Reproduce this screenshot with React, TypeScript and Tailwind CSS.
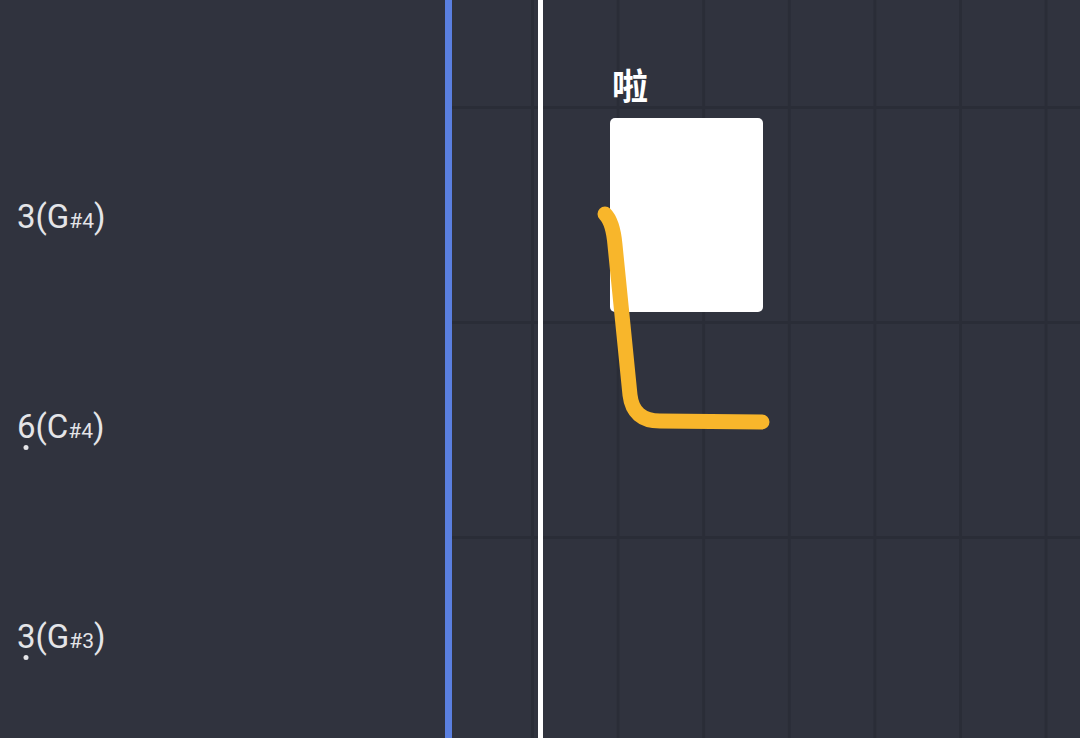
import React from 'react';

type Pitch = {
    degree: string;
    note: string;
    octave: string;
    low?: boolean;
};

const pitches: Pitch[] = [
    { degree: '3', note: 'G', octave: '4' },
    { degree: '6', note: 'C', octave: '4', low: true },
    { degree: '3', note: 'G', octave: '3', low: true }
];

function PitchLabel({ pitch }: { pitch: Pitch }) {
    return (
        <div className="flex h-[215px] items-center pl-[17px] pt-[6px] text-[#e4e5e8]">
            <span className="flex items-baseline text-[33px] leading-none">
                <span className="relative">
                    {pitch.degree}
                    {pitch.low && (
                        <span className="absolute left-1/2 top-[35px] h-[5px] w-[5px] -translate-x-1/2 rounded-full bg-[#e4e5e8]" />
                    )}
                </span>
                <span>({pitch.note}</span>
                <span className="text-[21px]">#{pitch.octave}</span>
                <span>)</span>
            </span>
        </div>
    );
}

export default function App() {
    return (
        <div
            className="flex h-[738px] w-[1080px] overflow-hidden bg-[#30333e]"
            style={{ fontFamily: 'Roboto, "Noto Sans CJK SC", sans-serif' }}
        >
            {/* Pitch column */}
            <div className="flex w-[452px] shrink-0 flex-col border-r-[7px] border-[#5a7fdf]">
                <div className="h-[108px] shrink-0" />
                {pitches.map((p, i) => (
                    <PitchLabel key={i} pitch={p} />
                ))}
            </div>

            {/* Roll grid */}
            <div className="relative flex-1 bg-[linear-gradient(to_right,#2a2d37_3px,transparent_3px),linear-gradient(to_bottom,#2a2d37_3px,transparent_3px)] bg-size-[85.6px_215px] bg-position-[79px_106px]">
                {/* Playhead */}
                <div className="absolute bottom-0 left-[86px] top-0 w-[5px] bg-white" />

                {/* Lyric + note */}
                <div className="absolute left-[160px] top-[70px] text-[36px] font-bold leading-none text-white">
                    啦
                </div>
                <div className="absolute left-[158px] top-[118px] h-[194px] w-[153px] rounded-[5px] bg-white" />
            </div>

            {/* Pitch curve */}
            <svg className="pointer-events-none absolute left-0 top-0" width="1080" height="738" viewBox="0 0 1080 738">
                <path
                    d="M605 214 Q613 222 615 245 L630 395 Q633 421 660 421 L762 422"
                    fill="none"
                    stroke="#f8b62b"
                    strokeWidth="15"
                    strokeLinecap="round"
                    strokeLinejoin="round"
                />
            </svg>
        </div>
    );
}
